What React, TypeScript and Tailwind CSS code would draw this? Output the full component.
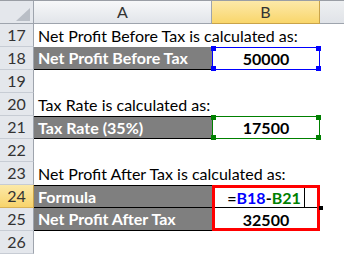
import React from "react";

const font = { fontFamily: "Lato, 'Liberation Sans', sans-serif" };

function Corner({ color }: { color: string }) {
  // selection handle squares at the four corners of a range box
  return (
    <>
      <span className={`absolute -left-[2px] -top-[2px] w-[5px] h-[5px] ${color}`} />
      <span className={`absolute -right-[2px] -top-[2px] w-[5px] h-[5px] ${color}`} />
      <span className={`absolute -left-[2px] -bottom-[2px] w-[5px] h-[5px] ${color}`} />
      <span className={`absolute -right-[2px] -bottom-[2px] w-[5px] h-[5px] ${color}`} />
    </>
  );
}

function RowNum({ n, active }: { n: number; active?: boolean }) {
  return (
    <div
      className={
        "w-[34px] h-[23px] shrink-0 flex items-center justify-center text-[16px] border-r border-b " +
        (active
          ? "bg-gradient-to-b from-[#fce9a7] to-[#f8d46b] text-[#333] border-r-[#c9a34a] border-b-[#d9b257]"
          : "bg-[#e4e7ec] text-[#333] border-r-[#9ea4ad] border-b-[#c7ccd4]")
      }
    >
      {n}
    </div>
  );
}

function Row({
  n,
  active,
  children,
}: {
  n: number;
  active?: boolean;
  children?: React.ReactNode;
}) {
  return (
    <div className="flex h-[23px]">
      <RowNum n={n} active={active} />
      {children}
    </div>
  );
}

function TextRow({ n, text }: { n: number; text?: string }) {
  return (
    <Row n={n}>
      <div className="flex-1 h-[23px] flex items-center pl-[4px] whitespace-nowrap text-[16px] text-black">
        {text}
      </div>
    </Row>
  );
}

function Label({ text, top }: { text: string; top?: boolean }) {
  return (
    <div
      className={
        "w-[178px] h-[23px] shrink-0 bg-[#7f7f7f] text-white font-bold text-[16px] flex items-center pl-[4px] whitespace-nowrap border-b border-black " +
        (top ? "border-t" : "")
      }
    >
      {text}
    </div>
  );
}

export default function App() {
  return (
    <div className="w-[344px] h-[254px] overflow-hidden bg-white" style={font}>
      {/* column headers */}
      <div className="flex h-[24px] border-t border-[#9a9ea5]">
        <div className="w-[34px] h-[23px] shrink-0 bg-[#e4e7ec] border-r border-b border-[#9ea4ad] flex items-end justify-end pr-[3px] pb-[2px]">
          <svg width="14" height="13" viewBox="0 0 14 13">
            <polygon points="14,0 14,13 0,13" fill="#b9bec6" />
          </svg>
        </div>
        <div className="w-[178px] h-[23px] shrink-0 bg-gradient-to-b from-[#f7f8f9] to-[#e2e5ea] border-r border-b border-[#9ea4ad] flex items-center justify-center text-[16px] text-[#333]">
          A
        </div>
        <div className="w-[108px] h-[23px] shrink-0 bg-gradient-to-b from-[#fde9a8] to-[#f9d66a] border-r border-b border-[#c9a34a] flex items-center justify-center text-[16px] text-[#333]">
          B
        </div>
        <div className="flex-1 h-[23px] bg-gradient-to-b from-[#eef0f2] to-[#e0e3e8] border-b border-[#9ea4ad]" />
      </div>

      <TextRow n={17} text="Net Profit Before Tax is calculated as:" />

      <Row n={18}>
        <Label text="Net Profit Before Tax" />
        <div className="relative w-[108px] h-[23px] shrink-0 flex items-center justify-center font-bold text-[16px] text-black">
          <div className="absolute inset-x-0 top-0 bottom-0 border border-[#0000ff]">
            <Corner color="bg-[#0000ff]" />
          </div>
          50000
        </div>
      </Row>

      <TextRow n={19} />
      <TextRow n={20} text="Tax Rate is calculated as:" />

      <Row n={21}>
        <Label text="Tax Rate (35%)" top />
        <div className="relative w-[108px] h-[23px] shrink-0 flex items-center justify-center font-bold text-[16px] text-black">
          <div className="absolute inset-x-0 top-0 bottom-0 border border-[#008000]">
            <Corner color="bg-[#008000]" />
          </div>
          17500
        </div>
      </Row>

      <TextRow n={22} />
      <TextRow n={23} text="Net Profit After Tax is calculated as:" />

      <div className="flex">
        <div className="flex flex-col">
          <Row n={24} active>
            <Label text="Formula" top />
          </Row>
          <Row n={25}>
            <Label text="Net Profit After Tax" />
          </Row>
        </div>
        <div className="relative w-[108px] h-[46px] shrink-0 border-[3px] border-[#ff0000] flex flex-col">
          <div className="h-[20px] flex items-center justify-center font-bold text-[16px] text-black border-b border-black">
            <span>=</span>
            <span className="text-[#0000ff]">B18</span>
            <span>-</span>
            <span className="text-[#008000]">B21</span>
            <span className="ml-[3px] inline-block w-px h-[19px] bg-black" />
          </div>
          <div className="flex-1 flex items-center justify-center font-bold text-[16px] text-black">
            32500
          </div>
          <span className="absolute -right-[6px] top-[18px] w-[4px] h-[4px] bg-black" />
        </div>
      </div>

      <TextRow n={26} />
    </div>
  );
}
